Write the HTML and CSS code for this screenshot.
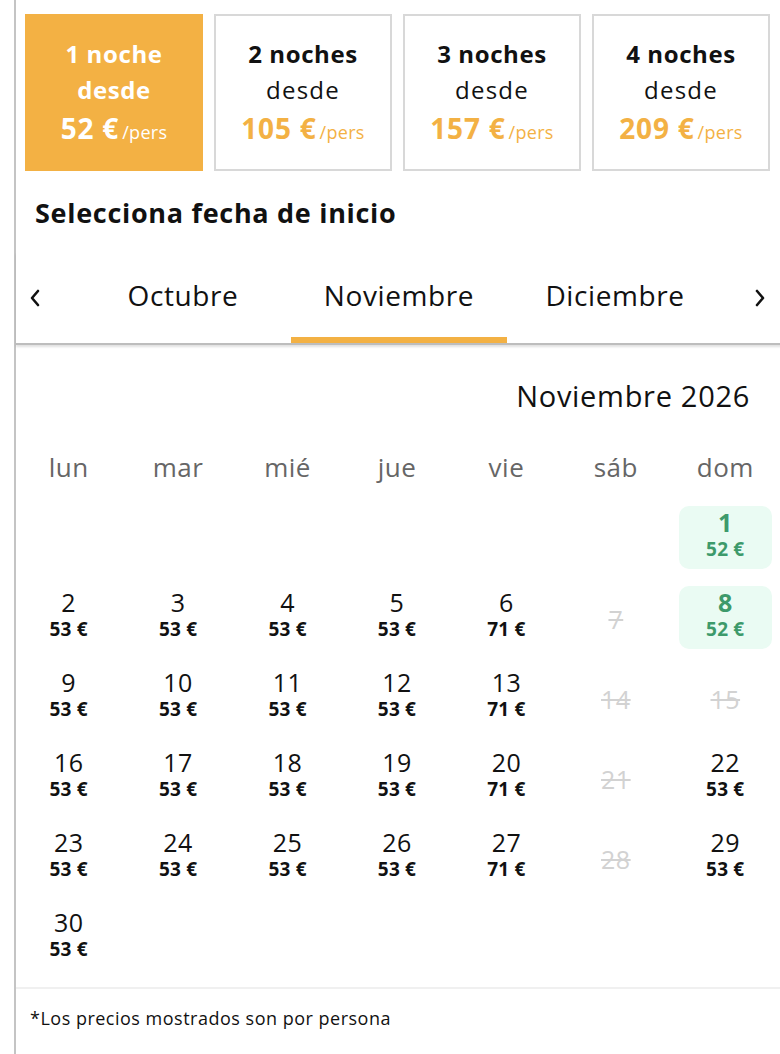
FILE: index.html
```html
<!DOCTYPE html>
<html lang="es">
<head>
<meta charset="utf-8">
<title>Selecciona fecha</title>
<link rel="stylesheet" href="styles.css">
</head>
<body>
<div class="page">
  <div class="nights">
    <div class="night active">
      <div class="n-title">1 noche</div>
      <div class="n-from">desde</div>
      <div class="n-price"><b>52 €</b><span>/pers</span></div>
    </div>
    <div class="night">
      <div class="n-title">2 noches</div>
      <div class="n-from">desde</div>
      <div class="n-price"><b>105 €</b><span>/pers</span></div>
    </div>
    <div class="night">
      <div class="n-title">3 noches</div>
      <div class="n-from">desde</div>
      <div class="n-price"><b>157 €</b><span>/pers</span></div>
    </div>
    <div class="night">
      <div class="n-title">4 noches</div>
      <div class="n-from">desde</div>
      <div class="n-price"><b>209 €</b><span>/pers</span></div>
    </div>
  </div>

  <h2 class="heading">Selecciona fecha de inicio</h2>

  <div class="tabs">
    <div class="arrow left"><svg width="12" height="18" viewBox="0 0 12 18"><path d="M9 2 L3 9 L9 16" fill="none" stroke="#111" stroke-width="2.6" stroke-linecap="round" stroke-linejoin="round"/></svg></div>
    <div class="tab">Octubre</div>
    <div class="tab current">Noviembre</div>
    <div class="tab">Diciembre</div>
    <div class="arrow right"><svg width="12" height="18" viewBox="0 0 12 18"><path d="M3 2 L9 9 L3 16" fill="none" stroke="#111" stroke-width="2.6" stroke-linecap="round" stroke-linejoin="round"/></svg></div>
  </div>

  <div class="month">Noviembre 2026</div>

  <div class="weekdays">
    <div>lun</div><div>mar</div><div>mié</div><div>jue</div><div>vie</div><div>sáb</div><div>dom</div>
  </div>

  <div class="days">
    <div class="cell empty"></div><div class="cell empty"></div><div class="cell empty"></div><div class="cell empty"></div><div class="cell empty"></div><div class="cell empty"></div>
    <div class="cell best"><span class="d">1</span><span class="p">52 €</span></div>

    <div class="cell"><span class="d">2</span><span class="p">53 €</span></div>
    <div class="cell"><span class="d">3</span><span class="p">53 €</span></div>
    <div class="cell"><span class="d">4</span><span class="p">53 €</span></div>
    <div class="cell"><span class="d">5</span><span class="p">53 €</span></div>
    <div class="cell"><span class="d">6</span><span class="p">71 €</span></div>
    <div class="cell off"><span class="d">7</span></div>
    <div class="cell best"><span class="d">8</span><span class="p">52 €</span></div>

    <div class="cell"><span class="d">9</span><span class="p">53 €</span></div>
    <div class="cell"><span class="d">10</span><span class="p">53 €</span></div>
    <div class="cell"><span class="d">11</span><span class="p">53 €</span></div>
    <div class="cell"><span class="d">12</span><span class="p">53 €</span></div>
    <div class="cell"><span class="d">13</span><span class="p">71 €</span></div>
    <div class="cell off"><span class="d">14</span></div>
    <div class="cell off"><span class="d">15</span></div>

    <div class="cell"><span class="d">16</span><span class="p">53 €</span></div>
    <div class="cell"><span class="d">17</span><span class="p">53 €</span></div>
    <div class="cell"><span class="d">18</span><span class="p">53 €</span></div>
    <div class="cell"><span class="d">19</span><span class="p">53 €</span></div>
    <div class="cell"><span class="d">20</span><span class="p">71 €</span></div>
    <div class="cell off"><span class="d">21</span></div>
    <div class="cell"><span class="d">22</span><span class="p">53 €</span></div>

    <div class="cell"><span class="d">23</span><span class="p">53 €</span></div>
    <div class="cell"><span class="d">24</span><span class="p">53 €</span></div>
    <div class="cell"><span class="d">25</span><span class="p">53 €</span></div>
    <div class="cell"><span class="d">26</span><span class="p">53 €</span></div>
    <div class="cell"><span class="d">27</span><span class="p">71 €</span></div>
    <div class="cell off"><span class="d">28</span></div>
    <div class="cell"><span class="d">29</span><span class="p">53 €</span></div>

    <div class="cell"><span class="d">30</span><span class="p">53 €</span></div>
  </div>

  <div class="footer">*Los precios mostrados son por persona</div>
</div>
</body>
</html>
```

FILE: styles.css
```css
* { box-sizing: border-box; }
html, body { margin: 0; padding: 0; background: #fff; }
body {
  font-family: "Open Sans", "DejaVu Sans", sans-serif;
  color: #111;
}
.page {
  margin-left: 14px;
  border-left: 2px solid #c4c4c4;
  min-height: 1054px;
  width: 766px;
}
.nights {
  display: flex;
  gap: 11px;
  padding: 14px 0 0 9px;
}
.night {
  width: 178px;
  height: 157px;
  border: 2px solid #d8d8d8;
  display: flex;
  flex-direction: column;
  align-items: center;
  justify-content: center;
  text-align: center;
  padding-top: 3px;
}
.night.active { background: #f3b144; border-color: #f3b144; color: #fff; }
.n-title { font-size: 24px; font-weight: 700; line-height: 36px; letter-spacing: 0.6px; }
.n-from { font-size: 24px; line-height: 36px; letter-spacing: 1.2px; }
.night.active .n-from { font-weight: 700; letter-spacing: 0.6px; }
.n-price { line-height: 40px; color: #f3b144; }
.night.active .n-price { color: #fff; }
.n-price b { font-size: 28px; font-weight: 700; letter-spacing: 0.8px; }
.n-price span { font-size: 18px; margin-left: 3px; letter-spacing: 0.3px; }

.heading {
  margin: 26px 0 0 19px;
  font-size: 27px;
  font-weight: 700;
  line-height: 32px;
  letter-spacing: 0.7px;
}
.tabs {
  display: flex;
  height: 93px;
  margin-top: 23px;
  border-bottom: 2px solid #bdbdbd;
  box-shadow: 0 2px 2px rgba(0,0,0,0.12);
  margin-right: -2px;
}
.arrow {
  display: flex;
  align-items: center;
  height: 90px;
  padding-top: 2px;
}
.arrow.left { width: 59px; padding-left: 13px; }
.arrow.right { flex: 1; justify-content: flex-end; padding-right: 16px; }
.tab {
  width: 216px;
  height: 91px;
  display: flex;
  align-items: center;
  justify-content: center;
  font-size: 28px;
  letter-spacing: 0.6px;
  border-bottom: 6px solid transparent;
  padding-top: 1px;
}
.tab.current { border-bottom-color: #f3b144; }

.month {
  text-align: right;
  padding-right: 30px;
  font-size: 29px;
  letter-spacing: 0.7px;
  line-height: 36px;
  margin-top: 33px;
}
.weekdays {
  display: grid;
  grid-template-columns: repeat(7, 1fr);
  margin-top: 37px;
  margin-left: -2px;
  color: #666;
  font-size: 26px;
  letter-spacing: 0.5px;
  line-height: 32px;
  text-align: center;
}
.days {
  display: grid;
  grid-template-columns: repeat(7, 1fr);
  row-gap: 17px;
  margin-top: 23px;
  margin-left: -2px;
}
.cell {
  height: 63px;
  margin: 0 8px;
  border-radius: 10px;
  display: flex;
  flex-direction: column;
  align-items: center;
  justify-content: flex-start;
  padding-top: 3px;
}
.cell .d { font-size: 25px; line-height: 27px; letter-spacing: 0.5px; }
.cell .p { font-size: 19px; font-weight: 700; line-height: 21px; margin-top: 3px; letter-spacing: 0.2px; }
.cell.best { background: #eafbf3; color: #3d9a6b; }
.cell.best .d { font-weight: 700; }
.cell.off { color: #d2d2d2; justify-content: center; padding-top: 4px; }
.cell.off .d { text-decoration: line-through; text-decoration-thickness: 1.5px; }

.footer {
  margin-top: 18px;
  border-top: 2px solid #f0f0f0;
  padding: 17px 0 0 14px;
  font-size: 18px;
  letter-spacing: 0.5px;
  line-height: 24px;
  margin-right: -2px;
}
```
